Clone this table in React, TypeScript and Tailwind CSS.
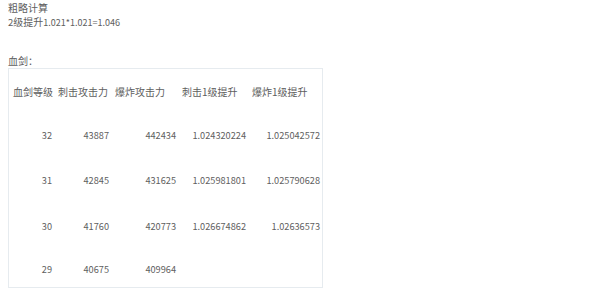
import React from 'react'

interface Row {
  level: string
  stab: string
  blast: string
  stabUp: string
  blastUp: string
  h: string
}

const rows: Row[] = [
  { level: '32', stab: '43887', blast: '442434', stabUp: '1.024320224', blastUp: '1.025042572', h: 'h-[44px]' },
  { level: '31', stab: '42845', blast: '431625', stabUp: '1.025981801', blastUp: '1.025790628', h: 'h-[46px]' },
  { level: '30', stab: '41760', blast: '420773', stabUp: '1.026674862', blastUp: '1.02636573', h: 'h-[46px]' },
  { level: '29', stab: '40675', blast: '409964', stabUp: '', blastUp: '', h: 'h-[38px] pt-[2px]' },
]

const widths = ['w-[45px]', 'w-[57px]', 'w-[67px]', 'w-[70px]', 'w-[74px]']

export default function App() {
  return (
    <div
      className="w-[600px] h-[290px] bg-white text-[10px] leading-[14px] text-[#5e5e5e] pl-2 pt-[1px] overflow-hidden"
      style={{ fontFamily: '"Noto Sans CJK SC", "Noto Sans", sans-serif' }}
    >
      <div>粗略计算</div>
      <div>
        <span className="text-[9.5px]">2</span>级提升<span className="text-[9px]">1.021*1.021=1.046</span>
      </div>
      <div className="mt-[24px]">血剑：</div>

      {/* table box */}
      <div className="w-[315px] border border-[#e6ebef]">
        <div className="flex items-center h-[44px] pt-[2px]">
          {['血剑等级', '刺击攻击力', '爆炸攻击力', '刺击1级提升', '爆炸1级提升'].map((t, i) => (
            <div key={i} className={`${widths[i]} pl-1 whitespace-nowrap`}>{t}</div>
          ))}
        </div>
        {rows.map((r) => (
          <div key={r.level} className={`flex items-center text-[9.2px] ${r.h}`}>
            {[r.level, r.stab, r.blast, r.stabUp, r.blastUp].map((v, i) => (
              <div key={i} className={`${widths[i]} pr-[2px] text-right whitespace-nowrap`}>{v}</div>
            ))}
          </div>
        ))}
      </div>
    </div>
  )
}
